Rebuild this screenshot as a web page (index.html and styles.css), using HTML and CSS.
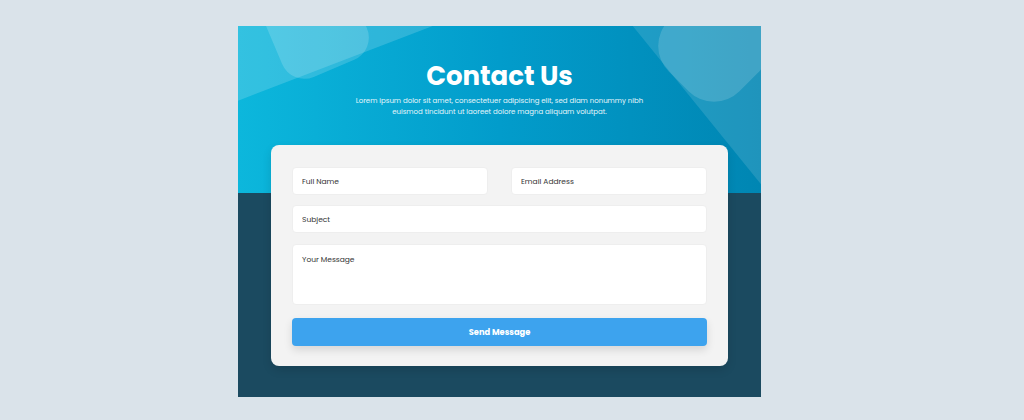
FILE: index.html
```html
<!DOCTYPE html>
<html lang="en">
<head>
<meta charset="utf-8">
<title>Contact Us</title>
<link rel="stylesheet" href="styles.css">
</head>
<body>
<main class="contact">
  <header class="hero">
    <span class="shape shape-a"></span>
    <span class="shape shape-b"></span>
    <span class="shape shape-c"></span>
    <span class="shape shape-d"></span>
    <h1 class="title">Contact Us</h1>
    <p class="lead">Lorem ipsum dolor sit amet, consectetuer adipiscing elit, sed diam nonummy nibh<br>euismod tincidunt ut laoreet dolore magna aliquam volutpat.</p>
  </header>
  <form class="card">
    <div class="row">
      <input class="field" type="text" placeholder="Full Name">
      <input class="field" type="email" placeholder="Email Address">
    </div>
    <input class="field" type="text" placeholder="Subject">
    <textarea class="field message" placeholder="Your Message"></textarea>
    <button class="send" type="button">Send Message</button>
  </form>
</main>
</body>
</html>
```

FILE: styles.css
```css
* { box-sizing: border-box; }
html, body { margin: 0; }
body {
  background: #dae3ea;
  height: 420px;
  padding: 26px 0 0 238px;
  font-family: "Poppins", "Open Sans", "Noto Sans", sans-serif;
}
.contact {
  width: 523px;
  height: 371px;
  background: #1b4a60;
  display: flex;
  flex-direction: column;
  overflow: hidden;
}
.hero {
  position: relative;
  height: 167px;
  flex: none;
  overflow: hidden;
  background: linear-gradient(90deg, #0cb7dc 0%, #029ccb 50%, #0086b3 100%);
  display: flex;
  flex-direction: column;
  align-items: center;
  padding-top: 31px;
  color: #fff;
}
.shape {
  position: absolute;
  background: rgba(255, 255, 255, 0.16);
}
.shape-a {
  width: 320px; height: 320px;
  left: -133px; top: -267px;
  transform: rotate(-21deg);
  border-radius: 40px;
}
.shape-b {
  width: 92px; height: 92px;
  left: 32px; top: -46px;
  transform: rotate(-23deg);
  border-radius: 24px;
}
.shape-c {
  width: 400px; height: 400px;
  left: 410px; top: -252px;
  transform: rotate(51deg);
  background: rgba(255, 255, 255, 0.12);
  border-radius: 40px;
}
.shape-d {
  width: 100px; height: 100px;
  left: 426px; top: -30px;
  transform: rotate(45deg);
  border-radius: 36px;
  background: rgba(255, 255, 255, 0.15);
}
.title {
  position: relative;
  margin: 0;
  font-size: 26px;
  font-weight: 700;
  line-height: 38px;
}
.lead {
  position: relative;
  margin: 0;
  font-size: 7px;
  line-height: 11px;
  text-align: center;
  color: #e6f6fb;
}
.card {
  margin: -48px 0 0 33px;
  width: 457px;
  background: #f3f3f3;
  border-radius: 8px;
  padding: 22px 21px 20px;
  display: flex;
  flex-direction: column;
  gap: 10px;
  position: relative;
  box-shadow: 0 4px 10px rgba(0, 0, 0, 0.12);
}
.row {
  display: flex;
  gap: 23px;
}
.field {
  display: block;
  width: 100%;
  height: 28px;
  border: 1px solid #eeeeee;
  border-radius: 4px;
  background: #fff;
  padding: 1px 9px 0;
  font-family: inherit;
  font-size: 7.5px;
  color: #333;
  outline: none;
}
.field::placeholder { color: #333; opacity: 1; }
.message {
  height: 61px;
  margin-top: 1px;
  padding-top: 9px;
  resize: none;
}
.send {
  margin-top: 3px;
  height: 28px;
  border: none;
  border-radius: 4px;
  background: #3da3ee;
  color: #fff;
  font-family: inherit;
  font-size: 8.3px;
  font-weight: 700;
  box-shadow: 0 4px 8px rgba(0, 0, 0, 0.12);
}
```
